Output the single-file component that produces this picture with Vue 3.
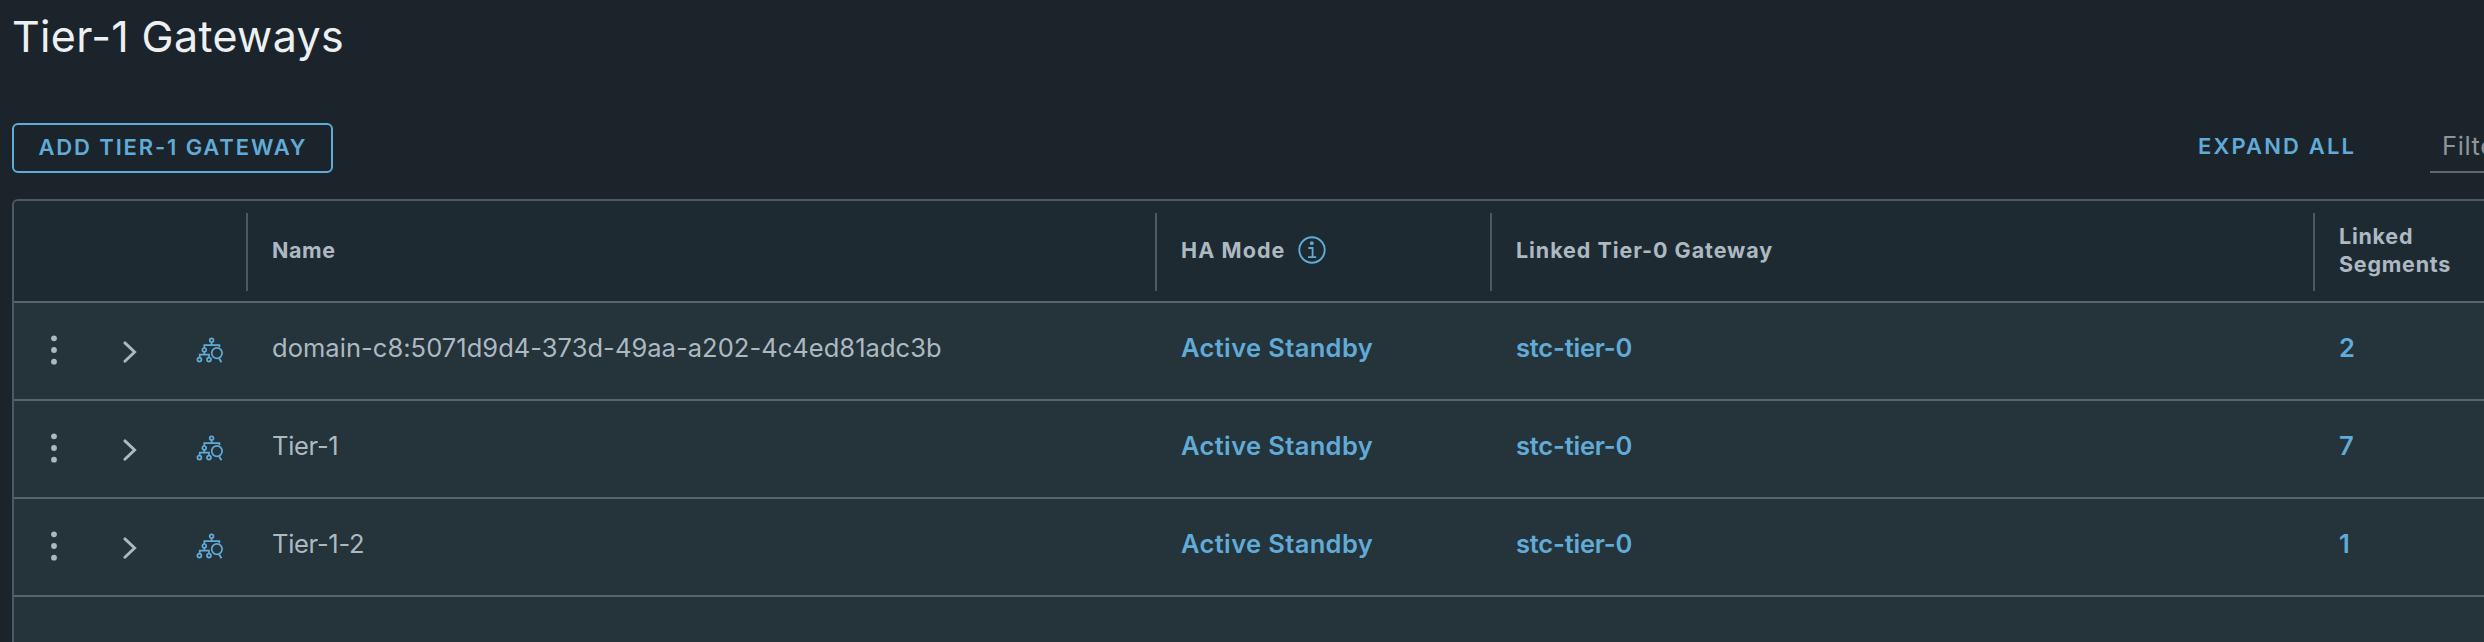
<script setup>
const gateways = [
  { name: 'domain-c8:5071d9d4-373d-49aa-a202-4c4ed81adc3b', haMode: 'Active Standby', tier0: 'stc-tier-0', segments: 2 },
  { name: 'Tier-1', haMode: 'Active Standby', tier0: 'stc-tier-0', segments: 7, tight: true },
  { name: 'Tier-1-2', haMode: 'Active Standby', tier0: 'stc-tier-0', segments: 1, tight: true },
]
</script>

<template>
  <main class="page">
    <h1 class="title">Tier-1 Gateways</h1>

    <div class="toolbar">
      <button class="add" type="button">ADD TIER-1 GATEWAY</button>
      <div class="tools">
        <a class="expand">EXPAND ALL</a>
        <div class="filter">Filter</div>
      </div>
    </div>

    <section class="table">
      <div class="grid head">
        <div></div>
        <div class="th">Name</div>
        <div class="th ha">
          <span class="ha-label">HA Mode</span>
          <svg class="info" width="28" height="28" viewBox="0 0 28 28" fill="none" stroke="currentColor">
            <circle cx="14" cy="14" r="12.7" stroke-width="1.9" />
            <circle cx="13.8" cy="7.2" r="1.9" fill="currentColor" stroke="none" />
            <path d="M10.3 12H14.6V21M10 21.2H18.2" stroke-width="1.8" />
          </svg>
        </div>
        <div class="th t0">Linked Tier-0 Gateway</div>
        <div class="th seg">Linked<br />Segments</div>
      </div>

      <div v-for="g in gateways" :key="g.name" class="grid row">
        <div class="actions">
          <svg class="dots" width="8" height="32" viewBox="0 0 8 32" fill="currentColor">
            <circle cx="4" cy="4.3" r="2.9" />
            <circle cx="4" cy="16" r="2.9" />
            <circle cx="4" cy="27.7" r="2.9" />
          </svg>
          <svg class="chevron" width="16" height="24" viewBox="0 0 16 24" fill="none" stroke="currentColor">
            <path d="M2.9 2.9L12.6 12L2.9 21.2" stroke-width="2.9" stroke-linecap="round" />
          </svg>
          <svg class="topology" width="28" height="26" viewBox="0 0 28 26" fill="none" stroke="currentColor" stroke-width="1.7">
            <circle cx="15.6" cy="3.3" r="1.9" />
            <path d="M15.6 5.2V8M8.3 11V8.1H23.4V10.2M8.3 14.8V17.6M3.7 20.5V17.7H13V20.5" />
            <circle cx="8.3" cy="12.9" r="1.9" />
            <circle cx="3.4" cy="22.6" r="2" />
            <circle cx="13" cy="22.6" r="2" />
            <circle cx="20.9" cy="16.1" r="5.2" stroke-width="1.7" />
            <path d="M23.1 21.2L25.4 25.2" stroke-width="1.9" />
          </svg>
        </div>
        <div class="td" :class="{ tight: g.tight }">{{ g.name }}</div>
        <div class="td link mode">{{ g.haMode }}</div>
        <div class="td link">{{ g.tier0 }}</div>
        <div class="td link">{{ g.segments }}</div>
      </div>
    </section>
  </main>
</template>

<style>
body {
  background: #1c242b;
}
</style>

<style scoped>
.page {
  box-sizing: border-box;
  width: 2484px;
  height: 642px;
  overflow: hidden;
  display: flex;
  flex-direction: column;
  padding: 10px 0 0 12px;
  background: #1c242b;
  color: #adb9c2;
  font-family: Inter, "Liberation Sans", sans-serif;
  white-space: nowrap;
}
.title {
  margin: 0;
  height: 113px;
  font-size: 43px;
  font-weight: 400;
  line-height: 53px;
  letter-spacing: 0.35px;
  color: #edf0f3;
}
.toolbar {
  flex: none;
  display: flex;
  justify-content: space-between;
  height: 76px;
}
.add {
  box-sizing: border-box;
  width: 321px;
  height: 50px;
  padding: 0 0 2px 24.5px;
  border: 2px solid #61abd8;
  border-radius: 6px;
  background: transparent;
  color: #61abd8;
  font: 600 22px/44px Inter, sans-serif;
  letter-spacing: 1.86px;
  text-align: left;
}
.tools {
  display: flex;
}
.expand {
  width: 232px;
  color: #61abd8;
  font-size: 22px;
  font-weight: 600;
  line-height: 46px;
  letter-spacing: 2.15px;
}
.filter {
  box-sizing: border-box;
  width: 54px;
  height: 50px;
  padding-left: 12px;
  border-bottom: 2px solid #5a6872;
  overflow: hidden;
  color: #8f9498;
  font-size: 25.5px;
  line-height: 46px;
  letter-spacing: 0.6px;
}
.table {
  flex: 1;
  border: 2px solid #4c5a65;
  border-right: 0;
  border-bottom: 0;
  border-radius: 6px 0 0 0;
  background: #25333a;
  overflow: hidden;
}
.grid {
  display: grid;
  grid-template-columns: 232px 909px 335px 823px 171px;
}
.head {
  height: 100px;
  border-bottom: 2px solid #566570;
  background: #1e2a32;
}
.th {
  display: flex;
  align-items: center;
  margin: 12px 0 10px;
  padding: 0 0 4px 24px;
  border-left: 2px solid #4c5863;
  font-size: 21.5px;
  font-weight: 700;
  line-height: 28px;
  letter-spacing: 0.6px;
}
.ha {
  letter-spacing: 1.1px;
}
.ha-label {
  width: 117px;
  padding-bottom: 1px;
}
.t0 {
  letter-spacing: 0.94px;
}
.seg {
  letter-spacing: 0.75px;
}
.info {
  color: #61abd8;
}
.row {
  height: 96px;
  border-bottom: 2px solid #566570;
}
.td {
  padding-left: 26px;
  font-size: 25.5px;
  line-height: 89px;
  letter-spacing: 0.04px;
}
.tight {
  letter-spacing: -0.3px;
}
.link {
  color: #61abd8;
  font-weight: 600;
  letter-spacing: -0.2px;
}
.mode.mode {
  letter-spacing: 0.36px;
}
.actions {
  display: flex;
  align-items: center;
}
.dots {
  margin: 0 64px 2px 36px;
}
.chevron {
  margin: 2px 58px 0 0;
}
.topology {
  margin-bottom: 3px;
  color: #61abd8;
}
</style>
